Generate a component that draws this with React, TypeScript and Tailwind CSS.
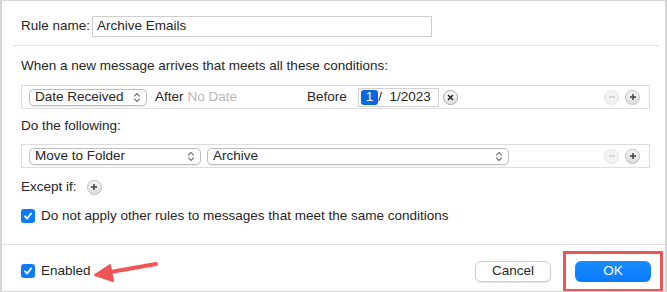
import React from "react";

const Chevrons = () => (
  <svg width="8" height="11" viewBox="0 0 8 11" className="shrink-0">
    <path d="M1.5 4 L4 1.5 L6.5 4" fill="none" stroke="#7a7a7a" strokeWidth="1.1" strokeLinecap="round" strokeLinejoin="round" />
    <path d="M1.5 7 L4 9.5 L6.5 7" fill="none" stroke="#7a7a7a" strokeWidth="1.1" strokeLinecap="round" strokeLinejoin="round" />
  </svg>
);

const Popup = ({ label, w }: { label: string; w: string }) => (
  <div className={`${w} h-[17px] rounded-[5px] border border-[#bdbdbd] bg-white flex items-center justify-between pl-[5px] pr-[5px] shadow-[0_0.5px_1px_rgba(0,0,0,0.08)]`}>
    <span className="leading-none">{label}</span>
    <Chevrons />
  </div>
);

const RoundBtn = ({ kind, disabled }: { kind: "plus" | "minus"; disabled?: boolean }) => (
  <div
    className={`w-[15px] h-[15px] rounded-full flex items-center justify-center border ${
      disabled ? "border-[#e2e2e2] bg-[#f3f3f3]" : "border-[#bfbfbf] bg-gradient-to-b from-[#f6f6f6] to-[#dcdcdc]"
    }`}
  >
    <svg width="8" height="8" viewBox="0 0 8 8">
      <path d="M1 4 H7" stroke={disabled ? "#d0d0d0" : "#4a4a4a"} strokeWidth="1.6" />
      {kind === "plus" && <path d="M4 1 V7" stroke="#4a4a4a" strokeWidth="1.6" />}
    </svg>
  </div>
);

const Check = () => (
  <div className="w-[14px] h-[14px] rounded-[3px] bg-[#0b7bff] flex items-center justify-center shrink-0">
    <svg width="10" height="10" viewBox="0 0 10 10">
      <path d="M2 5.3 L4.2 7.5 L8.2 2.4" fill="none" stroke="white" strokeWidth="1.8" strokeLinecap="round" strokeLinejoin="round" />
    </svg>
  </div>
);

export default function App() {
  return (
    <div
      className="relative w-[667px] h-[292px] bg-white border-t border-b border-l-2 border-r-2 border-[#d5d5d5] flex flex-col text-[13.5px] text-[#262626] overflow-hidden"
      style={{ fontFamily: '"Liberation Sans", Arial, sans-serif' }}
    >
      <div className="flex flex-col pl-[19px]">
        {/* Rule name */}
        <div className="mt-[15px] h-[21px] flex items-center">
          <span className="w-[71px]">Rule name:</span>
          <div className="w-[340px] h-[21px] border border-[#cfcfcf] flex items-center pl-[4px]">Archive Emails</div>
        </div>
        <div className="mt-[8px] -ml-[8px] w-[646px] h-px bg-[#e3e3e3]" />

        {/* Conditions */}
        <div className="mt-[12px] h-[16px] flex items-center">When a new message arrives that meets all these conditions:</div>
        <div className="mt-[11px] w-[629px] h-[24px] border border-[#dddddd] flex items-center pl-[7px] pr-[9px]">
          <div className="w-[278px] flex items-center">
            <Popup label="Date Received" w="w-[118px]" />
            <span className="ml-[8px]">After</span>
            <span className="ml-[4px] text-[#b8b8b8]">No Date</span>
          </div>
          <span>Before</span>
          <div className="ml-[11px] w-[81px] h-[19px] border border-[#d2d2d2] flex items-center pl-[2px]">
            <span className="bg-[#0b64e0] text-white rounded-[3px] px-[5px] h-[15px] flex items-center leading-none">1</span>
            <span>/&nbsp;&nbsp;1/2023</span>
          </div>
          <div className="ml-[4px] w-[15px] h-[15px] rounded-full border border-[#a8a8a8] bg-gradient-to-b from-[#fafafa] to-[#e2e2e2] flex items-center justify-center">
            <svg width="7" height="7" viewBox="0 0 7 7">
              <path d="M1 1 L6 6 M6 1 L1 6" stroke="#222" strokeWidth="1.4" />
            </svg>
          </div>
          <div className="ml-auto flex items-center gap-[6px]">
            <RoundBtn kind="minus" disabled />
            <RoundBtn kind="plus" />
          </div>
        </div>

        {/* Actions */}
        <div className="mt-[9px] h-[16px] flex items-center">Do the following:</div>
        <div className="mt-[10px] w-[629px] h-[24px] border border-[#dddddd] flex items-center pl-[7px] pr-[9px]">
          <Popup label="Move to Folder" w="w-[172px]" />
          <div className="ml-[6px]">
            <Popup label="Archive" w="w-[302px]" />
          </div>
          <div className="ml-auto flex items-center gap-[6px]">
            <RoundBtn kind="minus" disabled />
            <RoundBtn kind="plus" />
          </div>
        </div>

        {/* Except */}
        <div className="mt-[11px] h-[16px] flex items-center">
          <span>Except if:</span>
          <div className="ml-[10px]">
            <RoundBtn kind="plus" />
          </div>
        </div>

        <div className="mt-[13px] h-[16px] flex items-center">
          <Check />
          <span className="ml-[6px]">Do not apply other rules to messages that meet the same conditions</span>
        </div>
      </div>

      <div className="mt-[20px] h-px bg-[#e0e0e0]" />

      {/* Footer */}
      <div className="flex-1 flex items-end pl-[19px] pr-[14px] pb-[9px]">
        <div className="flex items-center mb-[1px]">
          <Check />
          <span className="ml-[6px]">Enabled</span>
        </div>
        <div className="ml-auto flex items-center gap-[24px]">
          <div className="w-[76px] h-[21px] rounded-[6px] bg-white border border-[#d0d0d0] shadow-[0_1px_1px_rgba(0,0,0,0.12)] flex items-center justify-center">
            Cancel
          </div>
          <div className="w-[76px] h-[21px] rounded-[6px] bg-gradient-to-b from-[#1a8cff] to-[#0a7aff] text-white flex items-center justify-center">
            OK
          </div>
        </div>
      </div>

      {/* Annotations */}
      <div className="absolute left-[561px] top-[250px] w-[100px] h-[41px] border-[3px] border-[#f05454]" />
      <svg className="absolute left-[0px] top-[0px] pointer-events-none" width="667" height="292">
        <path d="M154 263 L103 272" stroke="#f05454" strokeWidth="4" strokeLinecap="round" />
        <path d="M93 274 L108 264 L111 280 Z" fill="#f05454" stroke="#f05454" strokeWidth="2" strokeLinejoin="round" />
      </svg>
    </div>
  );
}
